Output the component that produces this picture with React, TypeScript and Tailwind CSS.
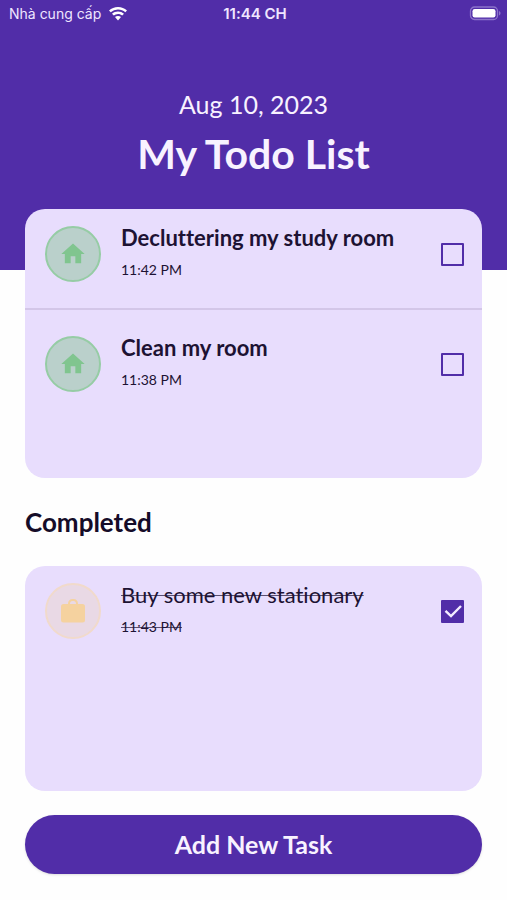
import { useState } from "react";
import { MdHome } from "react-icons/md";

type Category = "home" | "work";

interface Task {
  id: string;
  title: string;
  time: string;
  category: Category;
  done: boolean;
}

const initialTasks: Task[] = [
  { id: "declutter", title: "Decluttering my study room", time: "11:42 PM", category: "home", done: false },
  { id: "clean", title: "Clean my room", time: "11:38 PM", category: "home", done: false },
  { id: "stationary", title: "Buy some new stationary", time: "11:43 PM", category: "work", done: true },
];

function StatusBar() {
  return (
    <div className="grid h-7 grid-cols-3 items-center pr-1.5 pl-[9px] font-['Inter',sans-serif] text-[#efe6ff]">
      <div className="flex items-center gap-2 whitespace-nowrap">
        <span className="text-sm">Nhà cung cấp</span>
        <svg viewBox="0 0 18 14" className="h-3.5 w-[18px]" fill="white" aria-hidden="true">
          <path d="M9 0C5.600 0 2.400 1.300 0 3.500l1.700 1.800A10.700 10.700 0 0 1 9 2.500c2.800 0 5.400 1 7.300 2.800L18 3.500A13.200 13.200 0 0 0 9 0Z" />
          <path d="M9 4.400c-2.300 0-4.400.9-6 2.300l1.800 1.900A6.100 6.100 0 0 1 9 6.900c1.600 0 3.100.6 4.200 1.700L15 6.700a8.800 8.800 0 0 0-6-2.300Z" />
          <path d="M9 8.900c-1.200 0-2.200.5-3 1.200l3 3.400 3-3.400a4.400 4.400 0 0 0-3-1.200Z" />
        </svg>
      </div>
      <span className="text-center text-[15px] font-semibold">11:44 CH</span>
      <svg viewBox="0 0 32 16" className="h-4 w-8 justify-self-end" aria-hidden="true">
        <rect x="1.500" y="1" width="27" height="12.500" rx="4" fill="none" stroke="#8c73ca" strokeWidth="1.300" />
        <rect x="3.500" y="3" width="23" height="8.500" rx="2.200" fill="white" />
        <path d="M30 5v4.500c1-.4 1.500-1.200 1.500-2.200S31 5.500 30 5Z" fill="#8c73ca" />
      </svg>
    </div>
  );
}

function BriefcaseIcon() {
  return (
    <svg viewBox="0 0 24 24" className="size-6" aria-hidden="true">
      <rect x="0" y="5" width="24" height="18.500" rx="2.500" fill="currentColor" />
      <path d="M8 6V4.500a3.500 3.500 0 0 1 3.500-3.500h1a3.500 3.500 0 0 1 3.500 3.500V6" fill="none" stroke="currentColor" strokeWidth="2" />
    </svg>
  );
}

function CategoryBadge({ category }: { category: Category }) {
  const tone =
    category === "home"
      ? "border-[#96cca5] bg-[#bad0cb] text-[#80c58f]"
      : "border-[#f1dacb] bg-[#e9d9e5] text-[#f5d29f]";
  return (
    <span className={`flex size-14 shrink-0 items-center justify-center rounded-full border-2 ${tone}`}>
      {category === "home" ? <MdHome className="size-7" /> : <BriefcaseIcon />}
    </span>
  );
}

function TaskRow({ task, onToggle }: { task: Task; onToggle: (id: string) => void }) {
  return (
    <li className="flex items-center gap-5 pt-[22px] pr-[18px] pb-[22px] pl-5 first:pt-[13px]">
      <CategoryBadge category={task.category} />
      <label
        htmlFor={task.id}
        className={`min-w-0 flex-1 whitespace-nowrap text-[#1d1233] ${
          task.done ? "line-through decoration-[#1d1233]/70 decoration-1" : ""
        }`}
      >
        <span className={`block text-[22px] leading-8 ${task.done ? "font-normal" : "font-bold"}`}>
          {task.title}
        </span>
        <span className="block text-sm leading-8">{task.time}</span>
      </label>
      <span className="grid shrink-0 place-items-center">
        <input
          id={task.id}
          type="checkbox"
          checked={task.done}
          onChange={() => onToggle(task.id)}
          className="peer col-start-1 row-start-1 size-[23px] appearance-none rounded-[1px] border-2 border-[#512da8] checked:bg-[#512da8]"
        />
        <svg
          viewBox="0 0 22 22"
          className="pointer-events-none invisible col-start-1 row-start-1 size-[22px] peer-checked:visible"
          fill="none"
          stroke="#f3ebff"
          strokeWidth="2.400"
          aria-hidden="true"
        >
          <path d="M3.500 10.800 9 16 19 6" />
        </svg>
      </span>
    </li>
  );
}

export default function App() {
  const [tasks, setTasks] = useState(initialTasks);
  const toggle = (id: string) =>
    setTasks((list) => list.map((t) => (t.id === id ? { ...t, done: !t.done } : t)));

  return (
    <div className="flex min-h-screen flex-col bg-[#fefefe] font-['Lato',sans-serif] [font-variant-ligatures:none]">
      <header className="bg-[#512da8] pb-[86px] text-center text-[#f8f2ff]">
        <StatusBar />
        <p className="pt-14 text-[25px] leading-10">Aug 10, 2023</p>
        <h1 className="text-[41px] leading-[60px] font-bold">My Todo List</h1>
      </header>

      <main className="-mt-[61px] flex grow flex-col px-[25px] pb-[26px]">
        <ul className="min-h-[269px] divide-y-2 divide-[#d3c6e8] rounded-[20px] bg-[#e8ddfd]">
          {tasks.filter((t) => !t.done).map((t) => (
            <TaskRow key={t.id} task={t} onToggle={toggle} />
          ))}
        </ul>
        <h2 className="py-6 text-[26px] leading-10 font-bold text-[#150c28]">Completed</h2>
        <ul className="min-h-56 grow divide-y-2 divide-[#d3c6e8] rounded-[20px] bg-[#e8ddfd]">
          {tasks.filter((t) => t.done).map((t) => (
            <TaskRow key={t.id} task={t} onToggle={toggle} />
          ))}
        </ul>
        <button
          type="button"
          className="mt-6 h-[59px] rounded-full bg-[#512da8] text-[25px] font-bold text-[#f8f2ff] shadow-sm"
        >
          Add New Task
        </button>
      </main>
    </div>
  );
}
